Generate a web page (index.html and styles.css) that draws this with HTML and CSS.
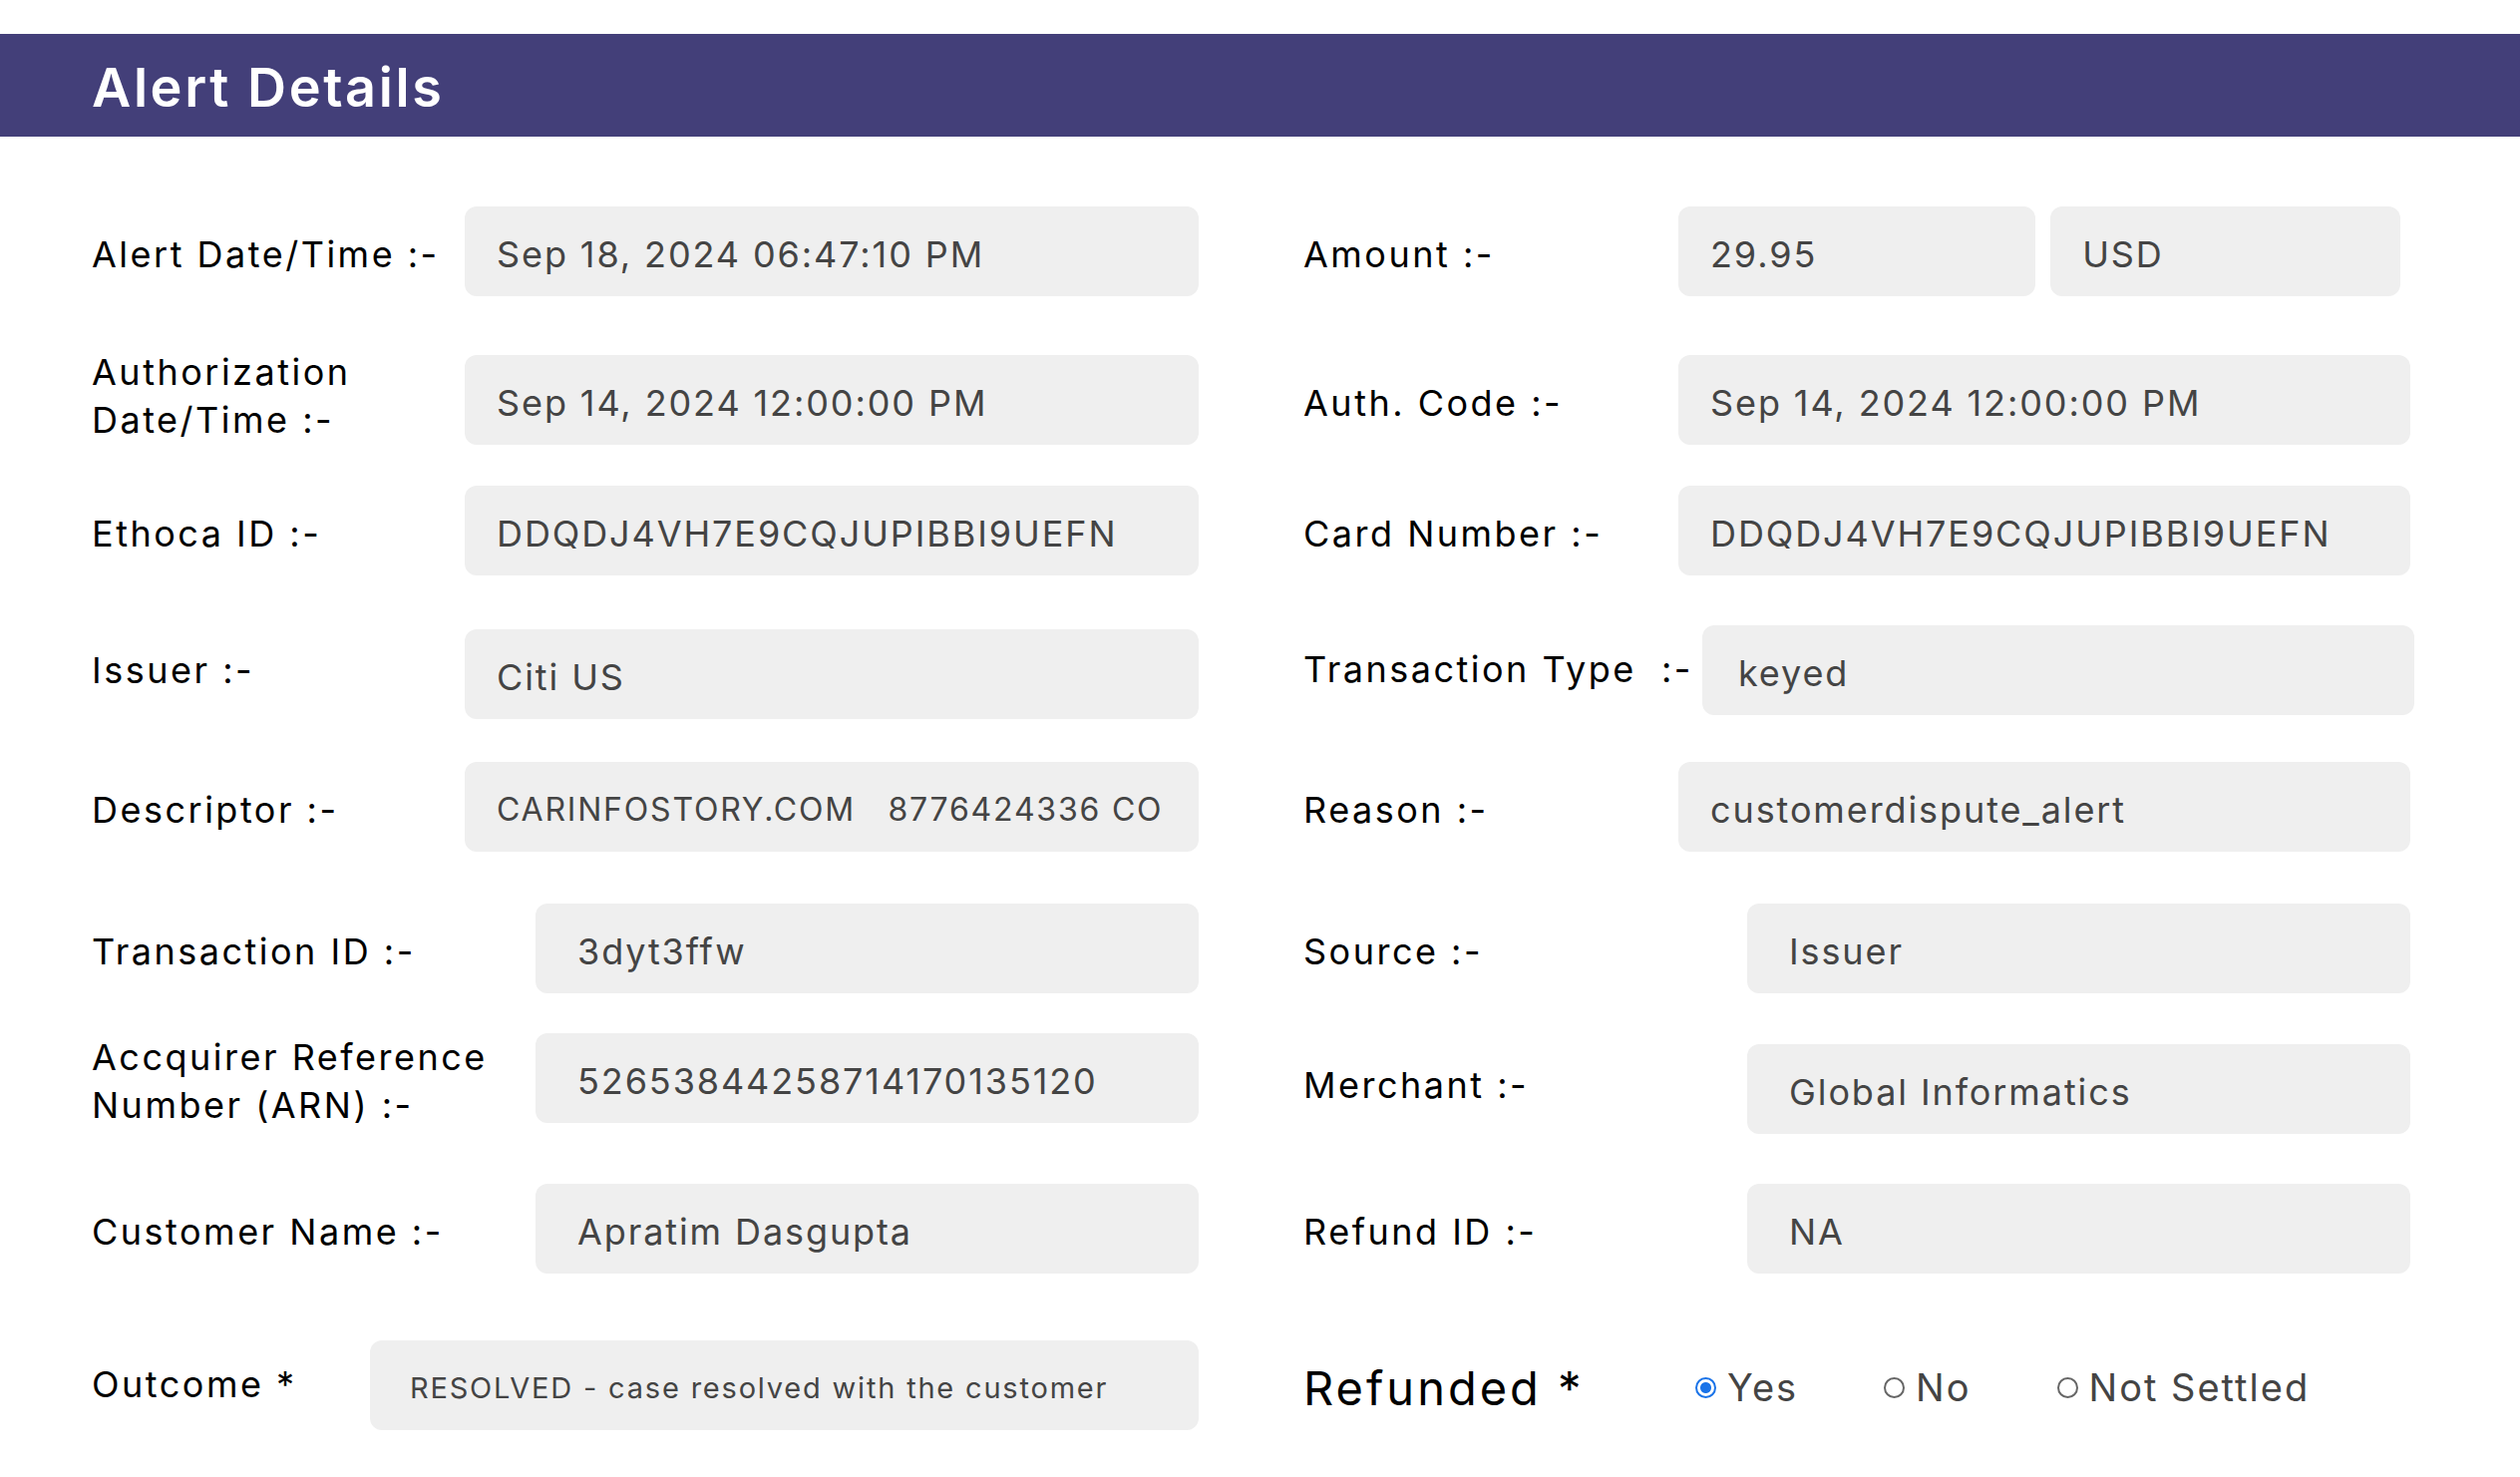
FILE: index.html
```html
<!DOCTYPE html>
<html lang="en">
<head>
<meta charset="utf-8">
<title>Alert Details</title>
<link rel="stylesheet" href="styles.css">
</head>
<body>
<header class="bar"><h1 class="bar-title">Alert Details</h1></header>
<main class="form">
  <div class="row">
    <div class="field"><div class="lbl w374">Alert Date/Time :-</div><div class="box">Sep 18, 2024 06:47:10 PM</div></div>
    <div class="field"><div class="lbl w376">Amount :-</div><div class="pair"><div class="box">29.95</div><div class="box">USD</div></div></div>
  </div>
  <div class="row row-2">
    <div class="field"><div class="lbl w374 up">Authorization<br>Date/Time :-</div><div class="box">Sep 14, 2024 12:00:00 PM</div></div>
    <div class="field"><div class="lbl w376">Auth. Code :-</div><div class="box">Sep 14, 2024 12:00:00 PM</div></div>
  </div>
  <div class="row row-3">
    <div class="field"><div class="lbl w374">Ethoca ID :-</div><div class="box">DDQDJ4VH7E9CQJUPIBBI9UEFN</div></div>
    <div class="field"><div class="lbl w376">Card Number :-</div><div class="box">DDQDJ4VH7E9CQJUPIBBI9UEFN</div></div>
  </div>
  <div class="row row-4">
    <div class="field"><div class="lbl w374 up">Issuer :-</div><div class="box">Citi US</div></div>
    <div class="field field-high"><div class="lbl w400 up-s">Transaction Type&nbsp; :-</div><div class="box box-wide pad36">keyed</div></div>
  </div>
  <div class="row row-5">
    <div class="field"><div class="lbl w374">Descriptor :-</div><div class="box small">CARINFOSTORY.COM &nbsp; 8776424336 CO</div></div>
    <div class="field"><div class="lbl w376">Reason :-</div><div class="box">customerdispute_alert</div></div>
  </div>
  <div class="row row-6">
    <div class="field"><div class="lbl w445">Transaction ID :-</div><div class="box pad42">3dyt3ffw</div></div>
    <div class="field"><div class="lbl w445">Source :-</div><div class="box pad42">Issuer</div></div>
  </div>
  <div class="row row-7">
    <div class="field"><div class="lbl w445">Accquirer Reference<br>Number (ARN) :-</div><div class="box pad42">52653844258714170135120</div></div>
    <div class="field field-low"><div class="lbl w445 up">Merchant :-</div><div class="box pad42">Global Informatics</div></div>
  </div>
  <div class="row">
    <div class="field"><div class="lbl w445">Customer Name :-</div><div class="box pad42">Apratim Dasgupta</div></div>
    <div class="field"><div class="lbl w445">Refund ID :-</div><div class="box pad42">NA</div></div>
  </div>
  <div class="row row-last">
    <div class="field"><div class="lbl w279 up-s">Outcome *</div><div class="box pad40 smaller">RESOLVED - case resolved with the customer</div></div>
    <div class="field"><div class="lbl lbl-big w393">Refunded *</div>
      <div class="radios">
        <span class="opt"><span class="radio checked"></span>Yes</span>
        <span class="opt"><span class="radio"></span>No</span>
        <span class="opt"><span class="radio"></span>Not Settled</span>
      </div>
    </div>
  </div>
</main>
</body>
</html>
```
FILE: styles.css
```css
* { box-sizing: border-box; }
html, body { margin: 0; padding: 0; background: #fff; }
body { font-family: "Inter", "Open Sans", sans-serif; color: #000; }

.bar {
  margin-top: 34px;
  height: 103px;
  background: #433f79;
  display: flex;
  align-items: center;
  padding-left: 92px;
  padding-top: 3px;
}
.bar-title {
  margin: 0;
  color: #fff;
  font-family: "Inter", sans-serif;
  font-weight: 600;
  font-size: 54px;
  letter-spacing: 2.6px;
}

.form {
  padding: 70px 110px 0 92px;
  display: flex;
  flex-direction: column;
  gap: 50px;
}
.row {
  display: grid;
  grid-template-columns: 1fr 1fr;
  column-gap: 105px;
}
.row-2 { margin-top: 9px; }
.row-3 { margin-top: -9px; }
.row-4 { margin-top: 4px; }
.row-5 { margin-top: -7px; }
.row-6 { margin-top: 2px; }
.row-7 { margin-top: -10px; }
.row-last { margin-top: 17px; }

.field {
  display: flex;
  align-items: center;
  height: 90px;
}
.field-low { margin-top: 11px; }
.field-high { margin-top: -4px; }

.lbl {
  flex: none;
  font-size: 36px;
  line-height: 48px;
  color: #000;
  letter-spacing: 2.5px;
  padding-top: 5px;
}
.lbl.up { position: relative; top: -7px; }
.lbl.up-s { position: relative; top: -4px; }
.w279 { width: 279px; }
.w374 { width: 374px; }
.w376 { width: 376px; }
.w393 { width: 393px; }
.w400 { width: 400px; }
.w445 { width: 445px; }

.box {
  flex: 1;
  height: 90px;
  background: #efefef;
  border-radius: 12px;
  display: flex;
  align-items: center;
  padding-left: 32px;
  padding-top: 5px;
  font-size: 36px;
  color: #444;
  letter-spacing: 1.9px;
  white-space: pre;
}
.box.small { font-size: 32px; letter-spacing: 1.8px; }
.box.smaller { font-size: 29px; letter-spacing: 1.8px; }
.pad36 { padding-left: 36px; }
.pad40 { padding-left: 40px; }
.pad42 { padding-left: 42px; }
.box-wide { margin-right: -4px; }

.pair {
  flex: 1;
  display: flex;
  gap: 15px;
  margin-right: 10px;
}
.pair .box:first-child { flex: 359; }
.pair .box:last-child { flex: 351; }

.lbl-big { font-size: 47px; line-height: 60px; letter-spacing: 3px; }

.radios {
  display: flex;
  align-items: center;
  font-size: 38px;
  color: #444;
  letter-spacing: 2px;
  padding-top: 4px;
}
.opt {
  display: inline-flex;
  align-items: center;
  gap: 11px;
  margin-right: 86px;
}
.radio {
  width: 21px;
  height: 21px;
  border-radius: 50%;
  border: 2px solid #666;
  background: #fff;
  flex: none;
}
.radio.checked {
  border: 2px solid #1a73e8;
  background: radial-gradient(circle, #1a73e8 0 5px, #fff 6px);
}
```
